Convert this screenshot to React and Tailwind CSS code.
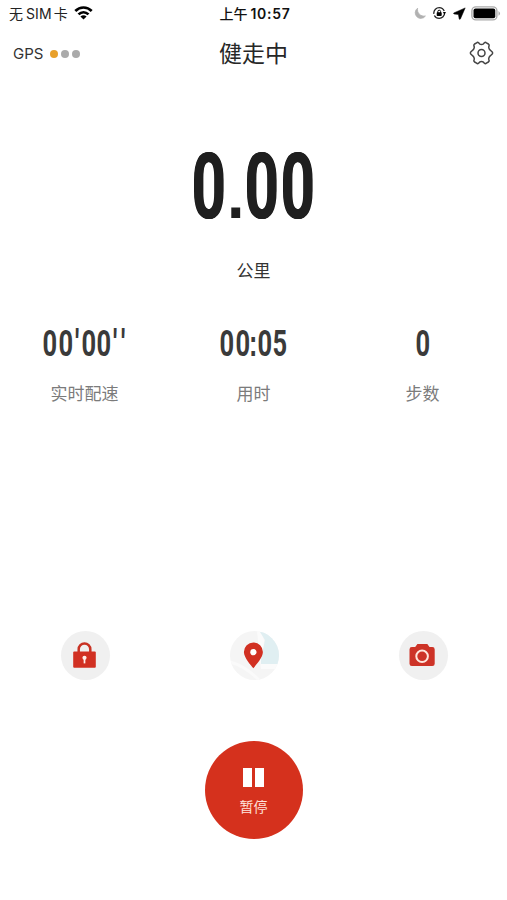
import React from 'react';

const bigWidths = { '0': 36, '.': 17 };
const smallWidths = { '0': 15.4, '5': 15.4, ':': 6.6, "'": 7.6 };

function BigNumber({ value }) {
  return (
    <div className="flex h-[94px] justify-center font-['Roboto'] text-[90px] leading-[95px] font-bold text-[#1f1f1f]">
      {value.split('').map((c, i) => (
        <span key={i} className="flex justify-center" style={{ width: bigWidths[c] }}>
          <span
            className={
              c === '.'
                ? "translate-y-[7px] scale-x-[0.9] font-['Liberation_Sans'] text-[70px] font-bold"
                : 'scale-x-[0.66] [text-shadow:0.9px_0_#1f1f1f,-0.9px_0_#1f1f1f]'
            }
          >
            {c}
          </span>
        </span>
      ))}
    </div>
  );
}

function SmallNumber({ value }) {
  return (
    <div className="flex h-10 justify-center font-['Roboto'] text-[37.5px] leading-10 font-bold text-[#3a3a3a]">
      {value.split('').map((c, i) => (
        <span key={i} className="flex justify-center" style={{ width: smallWidths[c] }}>
          <span
            className={
              c === ':'
                ? "translate-y-[0.5px] scale-x-[0.68] font-['Liberation_Sans'] text-[37px] font-bold"
                : c === "'"
                  ? 'scale-x-[0.7]'
                  : 'scale-x-[0.68]'
            }
          >
            {c}
          </span>
        </span>
      ))}
    </div>
  );
}

function Stat({ value, label }) {
  return (
    <div className="flex w-[169px] flex-col items-center">
      <SmallNumber value={value} />
      <div className="mt-[17px] text-[17px] leading-7 text-[#7b7b7b]">{label}</div>
    </div>
  );
}

function StatusBar() {
  return (
    <div className="flex h-[26px] items-center justify-between pr-[6px] pl-[9px] text-black">
      <div className="flex w-[170px] items-center text-[14px] text-[#222]">
        <span>无</span>
        <span className="ml-[3px] tracking-[0.1px]">SIM</span>
        <span className="ml-[2px]">卡</span>
        <svg className="ml-[6px]" width="19" height="14" viewBox="0 0 18 14">
          <g fill="none" stroke="#000" strokeWidth="2.7">
            <path d="M.8 5C5.5 .3 12.5 .3 17.2 5" />
            <path d="M4 8.4C7 5.5 11 5.5 14 8.4" />
          </g>
          <path d="M9 13.6L5.9 10.5Q9 8.1 12.1 10.5Z" />
        </svg>
      </div>
      <div className="flex items-center gap-[3px] text-[14px] font-medium text-[#111]">
        <span>上午</span>
        <span className="text-[14px] font-semibold tracking-[0.7px]">10:57</span>
      </div>
      <div className="flex w-[170px] items-center justify-end">
        <svg className="mr-[6px]" width="13" height="13" viewBox="0 0 13 13">
          <path d="M4.6 1.2A5.6 5.6 0 1 0 12.4 9A6.6 6.6 0 0 1 4.6 1.2Z" fill="#b1b1b1" stroke="#b1b1b1" strokeWidth=".8" strokeLinejoin="round" />
        </svg>
        <svg className="mr-[7px]" width="14" height="14" viewBox="0 0 14 14">
          <circle cx="7.2" cy="7" r="5.4" fill="none" stroke="#222" strokeWidth="1.3" strokeDasharray="14 1.5 15.5 2.2" />
          <path d="M10.9 6.1H14L12.4 8.6Z" />
          <path d="M5.8 7V5.6a1.4 1.4 0 0 1 2.8 0V7" fill="none" stroke="#000" strokeWidth="1" />
          <rect x="4.7" y="6.2" width="5" height="3.8" rx=".7" />
        </svg>
        <svg className="mr-[5px]" width="13" height="13" viewBox="0 0 13 13">
          <path d="M12.2 .9L.7 6Q.4 6.7 1 7L5.4 7.4L6.2 12Q6.7 12.8 7.4 12Z" stroke="#000" strokeWidth=".5" />
        </svg>
        <svg width="30" height="15" viewBox="0 0 30 15">
          <rect x=".9" y=".9" width="25" height="13" rx="4" fill="#fff" stroke="#aaa" strokeWidth="1.4" />
          <rect x="2.5" y="2.5" width="21.8" height="9.8" rx="2" />
          <path d="M27.5 5.1Q30.5 7.4 27.5 9.7Z" fill="#aaa" />
        </svg>
      </div>
    </div>
  );
}

function Header() {
  return (
    <div className="flex h-[54px] items-center justify-between px-[13px]">
      <div className="flex w-[130px] items-center pt-[2px] text-[15px] text-[#333]">
        <span className="tracking-[0px]">GPS</span>
        <span className="ml-[7px] flex gap-[3px]">
          <i className="size-2 rounded-full bg-[#e8a02b]" />
          <i className="size-2 rounded-full bg-[#aaa]" />
          <i className="size-2 rounded-full bg-[#aaa]" />
        </span>
      </div>
      <h1 className="pt-[2px] text-[23px] leading-8 text-[#272727]">健走中</h1>
      <div className="flex w-[130px] justify-end">
        <svg width="25" height="24" viewBox="0 0 25 24" fill="none" stroke="#444" strokeWidth="1.5" strokeLinejoin="round">
          <path d="M7.6 1.8Q8.6 .9 9.6 1.8L10.5 2.8Q12.5 4.1 14.5 2.8L15.4 1.8Q16.4 .9 17.4 1.8L19.4 3Q20.4 3.8 20 5L19.7 6.2Q19.8 8 21.4 9.3L23 10.8Q24.2 12 23 13.2L21.4 14.7Q19.8 16 19.7 17.8L20 19Q20.4 20.2 19.4 21L17.4 22.2Q16.4 23.1 15.4 22.2L14.5 21.2Q12.5 19.9 10.5 21.2L9.6 22.2Q8.6 23.1 7.6 22.2L5.6 21Q4.6 20.2 5 19L5.3 17.8Q5.2 16 3.6 14.7L2 13.2Q.8 12 2 10.8L3.6 9.3Q5.2 8 5.3 6.2L5 5Q4.6 3.8 5.6 3Z" />
          <circle cx="12.5" cy="12" r="3.5" />
        </svg>
      </div>
    </div>
  );
}

function LockButton() {
  return (
    <button className="flex size-[49px] items-center justify-center rounded-full bg-[#f0f0f0]">
      <svg width="49" height="49" viewBox="0 0 49 49">
        <path d="M17.7 22V18.3a5.8 5.8 0 0 1 11.6 0V22" fill="none" stroke="#c93224" strokeWidth="2.5" />
        <rect x="12.2" y="20.5" width="22.6" height="16.3" rx="1" fill="#d13022" />
        <circle cx="23.5" cy="26.8" r="2.1" fill="#fff0eb" />
        <path d="M23.5 27v5.4" stroke="#fff0eb" strokeWidth="1.7" />
      </svg>
    </button>
  );
}

function MapButton() {
  return (
    <button className="flex size-[49px] items-center justify-center overflow-hidden rounded-full bg-[#f5f5f5]">
      <svg width="49" height="49" viewBox="0 0 49 49">
        <path d="M27 0H31L34 9L33 33H49V38H31L29 20Z" fill="#fbfbfb" />
        <path d="M0 31Q15 35 29 49" fill="none" stroke="#fafafa" strokeWidth="3" />
        <path d="M30 1L35 9L31 28V33H49V1Z" fill="#e0eff2" />
        <path d="M23.3 37.3C21.1 34.4 13.9 26.8 13.9 21a9.5 9.5 0 0 1 19 0C32.9 26.8 25.4 34.4 23.3 37.3Z" fill="#d13022" />
        <circle cx="23.4" cy="21.2" r="3.1" fill="#fff" />
      </svg>
    </button>
  );
}

function CameraButton() {
  return (
    <button className="flex size-[49px] items-center justify-center rounded-full bg-[#f0f0f0]">
      <svg width="49" height="49" viewBox="0 0 49 49">
        <path d="M18.4 13H28.3L30.5 16H33.3Q35.7 16 35.7 18.4V32.8Q35.7 35 33.3 35H12.9Q10.5 35 10.5 32.8V18.4Q10.5 16 12.9 16H16.2Z" fill="#cd3327" />
        <circle cx="23.1" cy="25.3" r="5.8" fill="none" stroke="#ffe6dc" strokeWidth="2" />
      </svg>
    </button>
  );
}

export default function App() {
  return (
    <main className="flex h-[900px] w-[507px] flex-col overflow-hidden bg-white font-['Inter','Noto_Sans_CJK_SC',sans-serif]">
      <StatusBar />
      <Header />
      <section className="mt-[60px] flex flex-col items-center">
        <BigNumber value="0.00" />
        <div className="mt-[23px] text-[17px] leading-7 text-[#333]">公里</div>
      </section>
      <section className="mt-[38px] flex">
        <Stat value="00'00''" label="实时配速" />
        <Stat value="00:05" label="用时" />
        <Stat value="0" label="步数" />
      </section>
      <section className="mt-[223px] flex pl-px">
        <div className="flex w-[169px] justify-center"><LockButton /></div>
        <div className="flex w-[169px] justify-center"><MapButton /></div>
        <div className="flex w-[168px] justify-center"><CameraButton /></div>
      </section>
      <button className="mt-[61px] flex size-[98px] flex-col items-center self-center rounded-full bg-[#d5311d] pt-[27px] text-white">
        <span className="flex gap-[3px]">
          <i className="h-[19px] w-[9px] bg-white" />
          <i className="h-[19px] w-[9px] bg-white" />
        </span>
        <span className="mt-[9px] text-[14px] leading-[22px] text-[#ffe4dc]">暂停</span>
      </button>
    </main>
  );
}
